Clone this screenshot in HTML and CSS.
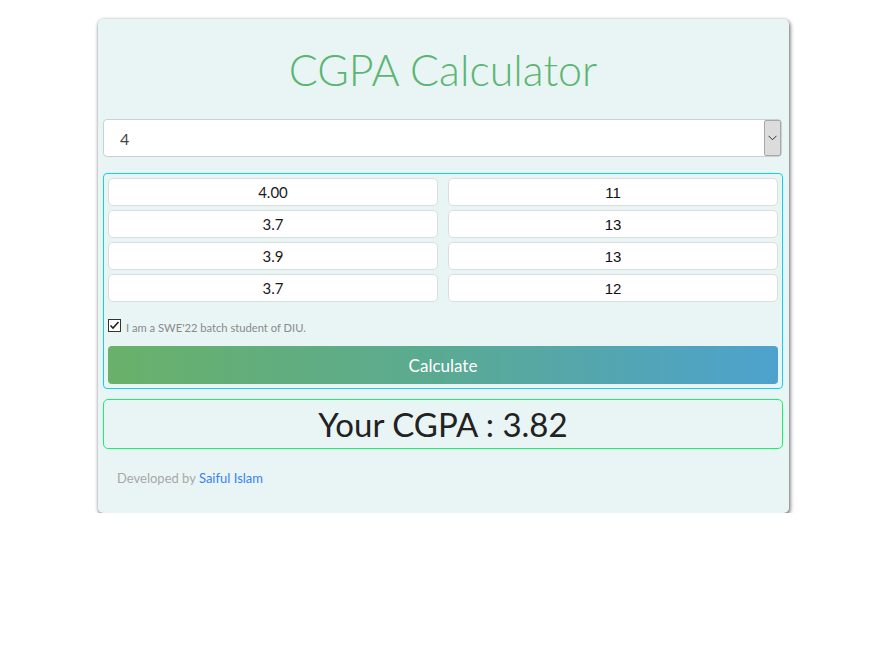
FILE: index.html
```html
<!DOCTYPE html>
<html>
<head>
<meta charset="utf-8">
<title>CGPA Calculator</title>
<link rel="stylesheet" href="styles.css">
</head>
<body>
<div class="card">
  <h1 class="title">CGPA Calculator</h1>
  <div class="select">
    <span class="select-value">4</span>
    <span class="select-arrow">
      <svg width="9" height="6" viewBox="0 0 9 6"><path d="M0.5 0.8 L4.5 4.8 L8.5 0.8" fill="none" stroke="#333" stroke-width="1"/></svg>
    </span>
  </div>
  <div class="box">
    <div class="grid">
      <div class="field gpa">4.00</div><div class="field credit">11</div>
      <div class="field gpa">3.7</div><div class="field credit">13</div>
      <div class="field gpa">3.9</div><div class="field credit">13</div>
      <div class="field gpa">3.7</div><div class="field credit">12</div>
    </div>
    <div class="check-row">
      <span class="checkbox">
        <svg width="13" height="13" viewBox="0 0 13 13"><rect x="0.5" y="0.5" width="12" height="12" fill="#fff" stroke="#333"/><path d="M2.5 6.5 L5 9 L10.5 3" fill="none" stroke="#222" stroke-width="1.6"/></svg>
      </span>
      <span class="check-label">I am a SWE'22 batch student of DIU.</span>
    </div>
    <div class="button">Calculate</div>
  </div>
  <div class="result">Your CGPA : 3.82</div>
  <div class="footer">Developed by <span class="link">Saiful Islam</span></div>
</div>
</body>
</html>
```
FILE: styles.css
```css
html, body {
  margin: 0;
  padding: 0;
  background: #fff;
}
body {
  font-family: "Lato", "Noto Sans", sans-serif;
}
.card {
  width: 680px;
  margin: 19px 0 0 98px;
  padding: 0 6px 0 5px;
  background: #e8f5f4;
  border-radius: 5px;
  box-shadow: 1px 2px 4px rgba(0,0,0,0.6), 0 0 3px rgba(0,0,0,0.12);
  box-sizing: content-box;
  height: 494px;
}
.title {
  margin: 0;
  padding: 27px 0 25px;
  font-size: 43px;
  line-height: 48px;
  font-weight: 300;
  color: #5cb573;
  text-align: center;
}
.select {
  height: 38px;
  box-sizing: border-box;
  border: 1px solid #c9d1d8;
  border-radius: 4px;
  background: #fff;
  display: flex;
  align-items: center;
  justify-content: space-between;
  padding: 0 0 0 16px;
  width: 679px;
}
.select-value {
  font-size: 16px;
  color: #444;
}
.select-arrow {
  width: 17px;
  height: 36px;
  box-sizing: border-box;
  background: #dcdcdc;
  border: 1px solid #a8a8a8;
  border-radius: 2px;
  display: flex;
  align-items: center;
  justify-content: center;
}
.box {
  margin-top: 16px;
  border: 1px solid #12d0f2;
  border-radius: 4px;
  padding: 4px;
  height: 206px;
}
.grid {
  display: grid;
  grid-template-columns: 1fr 1fr;
  column-gap: 10px;
  row-gap: 4px;
}
.field {
  height: 28px;
  box-sizing: border-box;
  background: #fff;
  border: 1px solid #dadde0;
  border-radius: 5px;
  display: flex;
  align-items: center;
  justify-content: center;
  color: #1a1a1a;
  font-size: 15px;
}
.field.credit {
  font-family: "Liberation Sans", Arial, sans-serif;
  font-size: 15px;
  color: #111;
}
.check-row {
  margin-top: 17px;
  height: 13px;
  display: flex;
  align-items: center;
}
.checkbox {
  width: 13px;
  height: 13px;
  display: block;
}
.checkbox svg { display: block; }
.check-label {
  margin-left: 5px;
  font-size: 11.2px;
  color: #8a8a8a;
  margin-top: 3px;
}
.button {
  margin-top: 14px;
  height: 38px;
  border-radius: 4px;
  background: linear-gradient(to right, #69b169, #5aaa93 50%, #4da2ce);
  color: #fff;
  font-size: 17px;
  display: flex;
  align-items: center;
  justify-content: center;
}
.result {
  margin-top: 10px;
  height: 50px;
  box-sizing: border-box;
  border: 1px solid #17f26b;
  border-radius: 5px;
  display: flex;
  align-items: center;
  justify-content: center;
  font-size: 33px;
  color: #222;
}
.footer {
  padding: 21px 0 0 14px;
  font-size: 13px;
  color: #a8a8a8;
}
.link {
  color: #3b7ff0;
}
```
